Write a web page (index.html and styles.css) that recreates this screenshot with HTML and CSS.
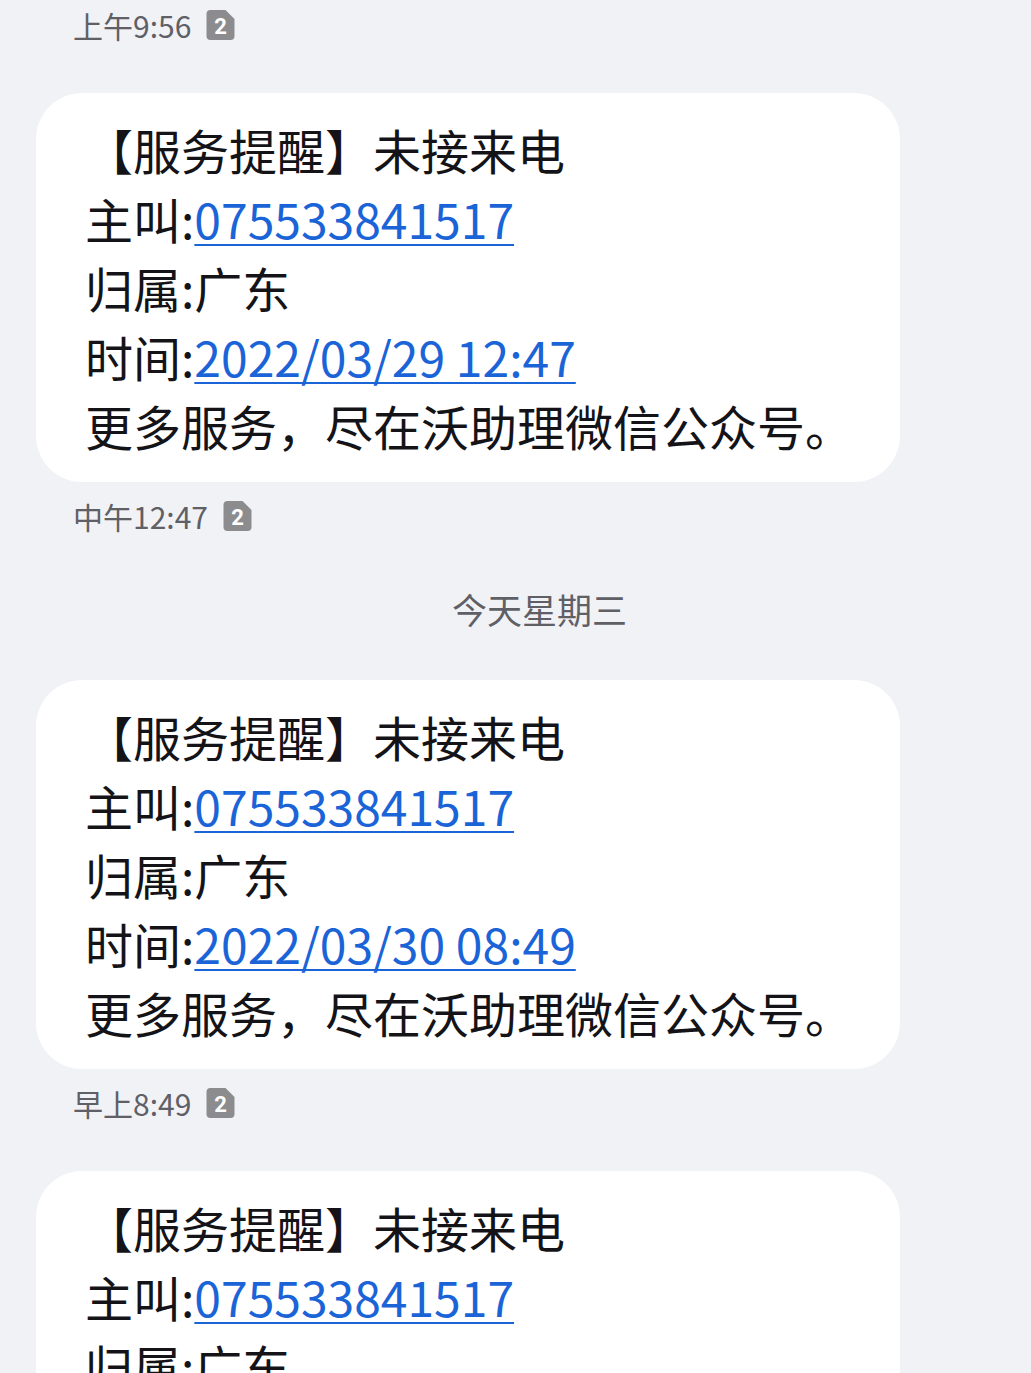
FILE: index.html
```html
<!DOCTYPE html>
<html lang="zh-CN">
<head>
<meta charset="utf-8">
<link rel="stylesheet" href="styles.css">
</head>
<body>
<div class="thread">
  <div class="meta first"><span>上午9:56</span><svg class="sim" viewBox="0 0 28 30" width="29" height="30"><path d="M4 0H19L28 9V26A4 4 0 0 1 24 30H4A4 4 0 0 1 0 26V4A4 4 0 0 1 4 0Z" fill="#8c8c8e"/><text x="14" y="24" text-anchor="middle" class="simtext">2</text></svg></div>

  <div class="bubble">
    <div class="line">【服务提醒】未接来电</div>
    <div class="line">主叫:<a class="link">075533841517</a></div>
    <div class="line">归属:广东</div>
    <div class="line">时间:<a class="link">2022/03/29 12:47</a></div>
    <div class="line">更多服务，尽在沃助理微信公众号。</div>
  </div>
  <div class="meta"><span>中午12:47</span><svg class="sim" viewBox="0 0 28 30" width="29" height="30"><path d="M4 0H19L28 9V26A4 4 0 0 1 24 30H4A4 4 0 0 1 0 26V4A4 4 0 0 1 4 0Z" fill="#8c8c8e"/><text x="14" y="24" text-anchor="middle" class="simtext">2</text></svg></div>

  <div class="day">今天星期三</div>

  <div class="bubble">
    <div class="line">【服务提醒】未接来电</div>
    <div class="line">主叫:<a class="link">075533841517</a></div>
    <div class="line">归属:广东</div>
    <div class="line">时间:<a class="link">2022/03/30 08:49</a></div>
    <div class="line">更多服务，尽在沃助理微信公众号。</div>
  </div>
  <div class="meta"><span>早上8:49</span><svg class="sim" viewBox="0 0 28 30" width="29" height="30"><path d="M4 0H19L28 9V26A4 4 0 0 1 24 30H4A4 4 0 0 1 0 26V4A4 4 0 0 1 4 0Z" fill="#8c8c8e"/><text x="14" y="24" text-anchor="middle" class="simtext">2</text></svg></div>

  <div class="bubble">
    <div class="line">【服务提醒】未接来电</div>
    <div class="line">主叫:<a class="link">075533841517</a></div>
    <div class="line">归属:广东</div>
    <div class="line">时间:<a class="link">2022/03/30 08:49</a></div>
    <div class="line">更多服务，尽在沃助理微信公众号。</div>
  </div>
</div>
</body>
</html>
```
FILE: styles.css
```css
html, body {
  margin: 0;
  padding: 0;
  background: #f1f2f6;
}
body {
  font-family: "Noto Sans CJK SC", "Noto Sans", sans-serif;
  overflow: hidden;
  height: 1373px;
}
.thread {
  display: flex;
  flex-direction: column;
  padding: 5px 0 0 0;
}
.meta {
  display: flex;
  align-items: center;
  gap: 15px;
  height: 40px;
  padding-left: 73px;
  margin-top: 14px;
  font-size: 30px;
  color: #5f6066;
}
.meta.first {
  margin-top: 0;
}
.sim {
  display: block;
}
.simtext {
  font-family: "Roboto", "Noto Sans", sans-serif;
  font-weight: 700;
  font-size: 22px;
  fill: #ffffff;
}
.day {
  text-align: center;
  font-size: 35px;
  color: #5f6066;
  height: 44px;
  line-height: 44px;
  margin-top: 51px;
  padding-left: 48px;
}
.bubble {
  background: #ffffff;
  margin: 48px 0 0 36px;
  width: 864px;
  box-sizing: border-box;
  border-radius: 46px;
  padding: 22px 20px 22px 49px;
  font-size: 48px;
  line-height: 69px;
  color: #141418;
}
.day + .bubble {
  margin-top: 49px;
}
.line {
  white-space: nowrap;
}
.link {
  color: #1b64d8;
  text-decoration: underline;
  text-decoration-thickness: 2px;
  text-underline-offset: 5px;
}
```
